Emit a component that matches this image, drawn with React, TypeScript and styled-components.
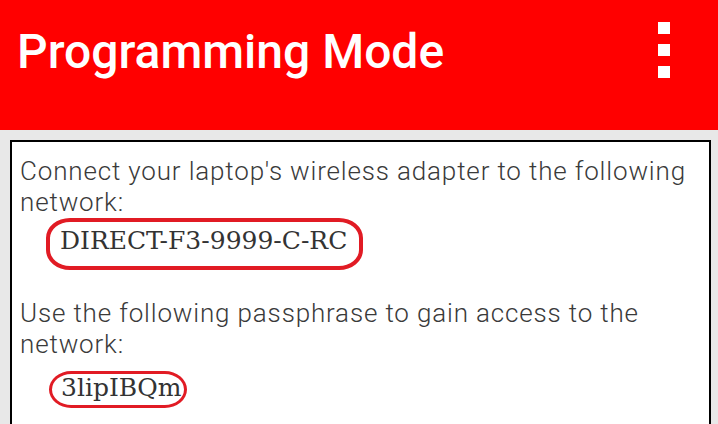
import React from "react";
import styled, { createGlobalStyle } from "styled-components";

const Global = createGlobalStyle`
  html, body { margin: 0; padding: 0; background: #e8e8e8; overflow: hidden; }
  body { font-family: Roboto, "Noto Sans", sans-serif; }
`;

const Page = styled.div`
  width: 718px;
  height: 424px;
  display: flex;
  flex-direction: column;
  background: #e8e8e8;
`;

const AppBar = styled.header`
  height: 130px;
  flex: none;
  background: #ff0000;
  display: flex;
  align-items: flex-start;
  justify-content: space-between;
  padding: 0 48px 0 17px;
  box-sizing: border-box;
`;

const Title = styled.h1`
  margin: 22px 0 0 0;
  font-family: Roboto, sans-serif;
  font-weight: 500;
  font-size: 48px;
  line-height: 60px;
  color: #ffffff;
`;

const Overflow = styled.div`
  margin-top: 22px;
  display: flex;
  flex-direction: column;
  gap: 10px;
`;

const Dot = styled.span`
  display: block;
  width: 12px;
  height: 12px;
  background: #ffffff;
`;

const Card = styled.section`
  margin: 10px 7px 0 10px;
  flex: 1;
  background: #ffffff;
  border: 2px solid #000000;
  border-bottom: none;
  padding: 14px 12px 0 8px;
`;

const Para = styled.p`
  margin: 0;
  font-family: Roboto, sans-serif;
  font-weight: 300;
  font-size: 26px;
  line-height: 31px;
  letter-spacing: 0.84px;
  color: #3a3a3a;
`;

const Block = styled.div<{ $gap?: number }>`
  margin-top: ${(p) => p.$gap ?? 0}px;
`;

const ValueRow = styled.div<{ $gap: number; $indent: number }>`
  padding-left: ${(p) => p.$indent}px;
  margin-top: ${(p) => p.$gap}px;
`;

const Circled = styled.span<{ $pad: string; $lh: number; $bw: number }>`
  display: inline-block;
  font-family: "DejaVu Serif", "Liberation Serif", serif;
  font-size: 25px;
  line-height: ${(p) => p.$lh}px;
  color: #333333;
  padding: ${(p) => p.$pad};
  border: ${(p) => p.$bw}px solid #e11b24;
  border-radius: 24px / 20px;
`;

export default function App() {
  return (
    <Page>
      <Global />
      <AppBar>
        <Title>Programming Mode</Title>
        <Overflow>
          <Dot />
          <Dot />
          <Dot />
        </Overflow>
      </AppBar>
      <Card>
        <Block>
          <Para>
            Connect your laptop's wireless adapter to the following network:
          </Para>
          <ValueRow $gap={0} $indent={26}>
            <Circled $pad="4px 12px 10px 10px" $lh={30} $bw={4}>
              DIRECT-F3-9999-C-RC
            </Circled>
          </ValueRow>
        </Block>
        <Block $gap={28}>
          <Para>
            Use the following passphrase to gain access to the network:
          </Para>
          <ValueRow $gap={11} $indent={29}>
            <Circled $pad="0 3px 3px 9px" $lh={28} $bw={3}>
              3lipIBQm
            </Circled>
          </ValueRow>
        </Block>
      </Card>
    </Page>
  );
}
